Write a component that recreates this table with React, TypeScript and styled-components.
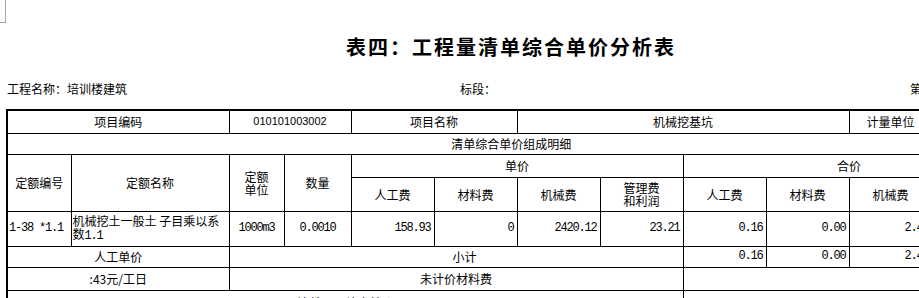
import React from "react";
import styled, { createGlobalStyle } from "styled-components";

const Global = createGlobalStyle`
  html, body { margin: 0; padding: 0; background: #fff; overflow: hidden; }
  body {
    font-family: "Noto Sans CJK SC", "Noto Sans", sans-serif;
    font-size: 12px;
    color: #000;
  }
`;

const Page = styled.div`
  width: 1100px;
`;

const CropMark = styled.div`
  width: 5px;
  height: 22px;
  border-right: 1px solid #a8a8a8;
  border-bottom: 1px solid #a8a8a8;
`;

const Sheet = styled.div`
  margin-left: 6px;
  width: 1008px;
`;

const Title = styled.h1`
  margin: 12px 0 0;
  font-size: 20px;
  line-height: 24px;
  font-weight: 700;
  letter-spacing: 2px;
  text-align: center;
  padding-left: 2px;
`;

const InfoRow = styled.div`
  display: grid;
  grid-template-columns: 453px 450px auto;
  margin-top: 22px;
  padding-left: 1px;
  line-height: 16px;
  white-space: nowrap;
`;

const Table = styled.table`
  margin-top: 12px;
  width: 1008px;
  border-collapse: collapse;
  table-layout: fixed;
  border-top: 2px solid #000;
  border-left: 2px solid #000;
`;

const Row = styled.tr<{ $h: number }>`
  height: ${(p) => p.$h}px;
`;

const Cell = styled.td<{
  $align?: "left" | "center" | "right";
  $mono?: boolean;
  $code?: boolean;
  $shift?: number;
}>`
  border: 1px solid #000;
  padding: 0 ${(p) => (p.$align === "right" ? 3 : 1)}px 0
    ${(p) => (p.$shift ? p.$shift : 1)}px;
  text-align: ${(p) => p.$align || "center"};
  vertical-align: middle;
  line-height: 13px;
  overflow: hidden;
  white-space: ${(p) => (p.$align === "left" ? "normal" : "nowrap")};
  font-family: ${(p) =>
    p.$mono
      ? `"Liberation Mono", monospace`
      : p.$code
      ? `"Liberation Sans", sans-serif`
      : `"Noto Sans CJK SC", sans-serif`};
  font-size: ${(p) => (p.$code ? "11px" : "12px")};
  letter-spacing: ${(p) => (p.$mono ? "-1.2px" : "0")};
`;

const Mono = styled.span`
  font-family: "Liberation Mono", monospace;
  letter-spacing: -1.2px;
`;

const cols = [64, 158, 55, 67, 83, 83, 83, 83, 83, 83, 83, 83];

export default function App() {
  return (
    <Page>
      <Global />
      <CropMark />
      <Sheet>
        <Title>表四：工程量清单综合单价分析表</Title>
        <InfoRow>
          <span>工程名称：培训楼建筑</span>
          <span>标段：</span>
          <span>第 1 页 共 1 页</span>
        </InfoRow>
        <Table>
          <colgroup>
            {cols.map((w, i) => (
              <col key={i} style={{ width: w }} />
            ))}
          </colgroup>
          <tbody>
            <Row $h={23}>
              <Cell colSpan={2}>项目编码</Cell>
              <Cell colSpan={2} $code>
                010101003002
              </Cell>
              <Cell colSpan={2}>项目名称</Cell>
              <Cell colSpan={4}>机械挖基坑</Cell>
              <Cell>计量单位</Cell>
              <Cell $mono>m3</Cell>
            </Row>
            <Row $h={21}>
              <Cell colSpan={12}>清单综合单价组成明细</Cell>
            </Row>
            <Row $h={23}>
              <Cell rowSpan={2}>定额编号</Cell>
              <Cell rowSpan={2}>定额名称</Cell>
              <Cell rowSpan={2}>
                定额
                <br />
                单位
              </Cell>
              <Cell rowSpan={2}>数量</Cell>
              <Cell colSpan={4}>单价</Cell>
              <Cell colSpan={4}>合价</Cell>
            </Row>
            <Row $h={34}>
              <Cell>人工费</Cell>
              <Cell>材料费</Cell>
              <Cell>机械费</Cell>
              <Cell>
                管理费
                <br />
                和利润
              </Cell>
              <Cell>人工费</Cell>
              <Cell>材料费</Cell>
              <Cell>机械费</Cell>
              <Cell>
                管理费
                <br />
                和利润
              </Cell>
            </Row>
            <Row $h={35}>
              <Cell $align="left" $mono>
                1-38 *1.1
              </Cell>
              <Cell $align="left">
                机械挖土一般土 子目乘以系数<Mono>1.1</Mono>
              </Cell>
              <Cell $mono>1000m3</Cell>
              <Cell $mono>0.0010</Cell>
              <Cell $align="right" $mono>
                158.93
              </Cell>
              <Cell $align="right" $mono>
                0
              </Cell>
              <Cell $align="right" $mono>
                2420.12
              </Cell>
              <Cell $align="right" $mono>
                23.21
              </Cell>
              <Cell $align="right" $mono>
                0.16
              </Cell>
              <Cell $align="right" $mono>
                0.00
              </Cell>
              <Cell $align="right" $mono>
                2.42
              </Cell>
              <Cell $align="right" $mono>
                0.02
              </Cell>
            </Row>
            <Row $h={21}>
              <Cell colSpan={2}>人工单价</Cell>
              <Cell colSpan={6} $shift={18}>
                小计
              </Cell>
              <Cell $align="right" $mono>
                0.16
              </Cell>
              <Cell $align="right" $mono>
                0.00
              </Cell>
              <Cell $align="right" $mono>
                2.42
              </Cell>
              <Cell $align="right" $mono>
                0.02
              </Cell>
            </Row>
            <Row $h={23}>
              <Cell colSpan={2}>:43元/工日</Cell>
              <Cell colSpan={6}>未计价材料费</Cell>
              <Cell colSpan={4}></Cell>
            </Row>
            <Row $h={24}>
              <Cell colSpan={8}>清单项目综合单价</Cell>
              <Cell colSpan={4} $align="right" $mono>
                2.60
              </Cell>
            </Row>
          </tbody>
        </Table>
      </Sheet>
    </Page>
  );
}
